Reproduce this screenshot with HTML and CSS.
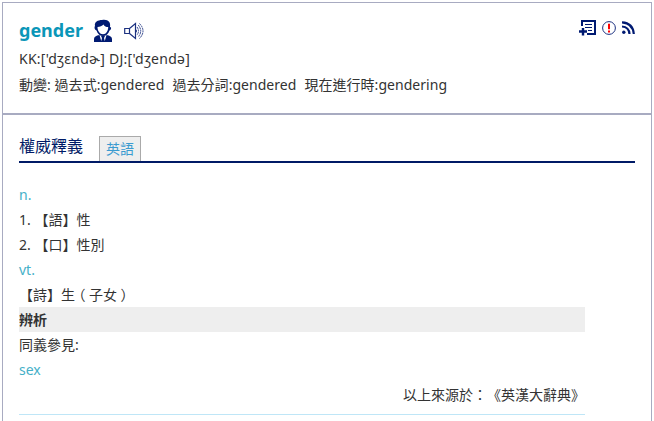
FILE: index.html
```html
<!DOCTYPE html>
<html lang="zh-Hant">
<head>
<meta charset="utf-8">
<title>gender</title>
<link rel="stylesheet" href="styles.css">
</head>
<body>
<main class="entry">
  <header class="head">
    <div class="title-row">
      <h1 class="word">gender</h1>
      <svg class="person" width="20" height="24" viewBox="0 0 20 24">
        <path d="M2 7C1 3 5 1 9 1c6-1 9 2 8 7 2 0 1 3-.5 3.500C15.500 15 13 17 10 17s-5.500-2-6.500-5.500C1.500 11 1 8 2 7z" fill="#001a72"/>
        <path d="M4.500 8C7 8 9 7 10.500 5.500c1 2 2.500 2.500 4.700 2.500 0 4-2 7.200-5.200 7.200s-5.500-3.200-5.500-7.200z" fill="#fff"/>
        <path d="M1 23v-3c0-2 2-3.500 5.500-4l2 7zM19 23v-3c0-2-2-3.500-5.500-4l-2 7zM8 17h4l-1 2 1 4H8l1-4z" fill="#001a72"/>
      </svg>
      <svg class="speaker" width="20" height="18" viewBox="0 0 20 18" fill="none" stroke="#1c3180">
        <path d="M.7 6.500h4.800v5H.7zM5.500 6.500L11.500 1.500v15l-6-5" stroke-width="1.200"/>
        <path d="M11.500 7.200q2 1.800 0 3.600" fill="#1c3180"/>
        <path d="M13 5q3 4 0 8M14.200 3q5 6 0 12M15.500 1.500q7 7.500 0 15" stroke-width=".9" stroke-dasharray="2 .6"/>
      </svg>
      <div class="tools">
        <svg width="17" height="16" viewBox="0 0 17 16" fill="none" stroke="#001a72">
          <path d="M3 6V1h13v13H8" stroke-width="2"/>
          <path d="M6 4.500h7M6 7.500h7M9 10.500h4" stroke-width="1.200"/>
          <path d="M0 11.500h8M4 8v7.500" stroke-width="2.400"/>
        </svg>
        <svg width="14" height="14" viewBox="0 0 14 14" fill="none">
          <circle cx="7" cy="7" r="6.400" stroke="#1c3180" stroke-width="1"/>
          <path d="M7 2.800v5.400M7 9.400v2" stroke="#f00" stroke-width="2"/>
        </svg>
        <svg width="13" height="13" viewBox="0 0 13 13" fill="none" stroke="#001a72" stroke-width="2.200">
          <circle cx="1.800" cy="11.200" r="1.700" fill="#001a72" stroke="none"/>
          <path d="M0 5.500q7 .5 7.500 7.500M0 1.300q11 .7 11.800 11.700"/>
        </svg>
      </div>
    </div>
    <p class="phonetic">KK:['dʒɛndɚ] DJ:['dʒendə]</p>
    <p class="forms"><span>動變: 過去式:gendered</span><span>過去分詞:gendered</span><span>現在進行時:gendering</span></p>
  </header>
  <section class="body">
    <div class="tabs">
      <h2 class="tab-title">權威釋義</h2>
      <a class="tab">英語</a>
    </div>
    <div class="content">
      <p class="accent">n.</p>
      <p>1. 【語】性</p>
      <p>2. 【口】性別</p>
      <p class="accent">vt.</p>
      <p>【詩】生<span class="paren">（</span>子女<span class="paren">）</span></p>
      <h3 class="bar">辨析</h3>
      <p>同義參見:</p>
      <p class="accent">sex</p>
      <p class="source">以上來源於：《英漢大辭典》</p>
    </div>
  </section>
</main>
</body>
</html>
```

FILE: styles.css
```css
* { box-sizing: border-box; margin: 0; padding: 0; }
html, body { height: 421px; overflow: hidden; }
body {
  background: #fff;
  color: #333;
  font: 14px/25px "Noto Sans", "Noto Sans CJK TC", sans-serif;
  text-spacing-trim: space-all;
}
.entry {
  width: 650px;
  height: 440px;
  margin: 2px 0 0 2px;
  border: 1px solid #a8abc1;
}
.head {
  height: 112px;
  padding: 12px 16px 0;
  border-bottom: 2px solid #a8abc1;
}
.title-row { display: flex; align-items: center; height: 31px; }
.word { font-size: 18px; line-height: 31px; color: #0a96b8; }
.person { margin-left: 10px; }
.speaker { margin-left: 11px; }
.tools { display: flex; align-items: center; gap: 6px; margin-left: auto; margin-top: -6px; }
.phonetic { line-height: 26px; letter-spacing: .25px; }
.forms { display: flex; gap: 8px; line-height: 26px; white-space: nowrap; letter-spacing: .04px; }
.body { padding: 21px 16px 0; }
.tabs {
  display: flex;
  height: 27px;
  border-bottom: 2px solid #001a66;
}
.tab-title { width: 80px; font-size: 16px; font-weight: 400; line-height: 21px; color: #001a66; }
.tab {
  width: 42px;
  height: 25px;
  border: 1px solid #aaa;
  border-bottom: 0;
  background: #eee;
  color: #3a9bd0;
  line-height: 24px;
  text-align: center;
}
.content { width: 566px; height: 233px; margin-top: 19px; border-bottom: 1px solid #bfe6f7; }
.accent { color: #45b0c8; }
.paren { margin: 0 3.5px; font-feature-settings: "halt"; }
.bar { background: #eee; font-size: 14px; font-weight: 700; }
.source { text-align: right; }
```
